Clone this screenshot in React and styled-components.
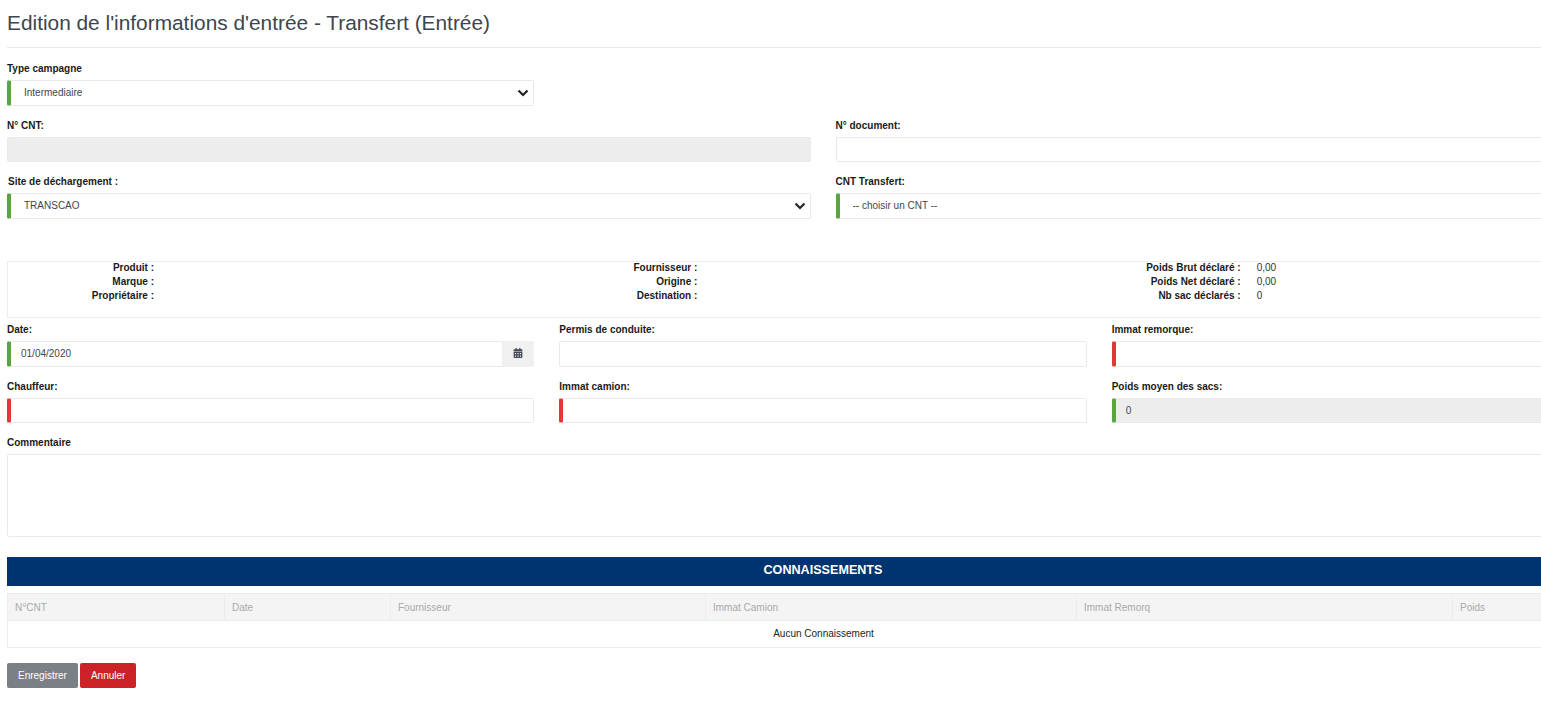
import React from "react";
import styled, { createGlobalStyle } from "styled-components";
import { FaCalendarAlt } from "react-icons/fa";

const Global = createGlobalStyle`
  html, body { margin: 0; padding: 0; background: #fff; overflow: hidden; height: 100%; }
  body { font-family: "Liberation Sans", Arial, sans-serif; color: #212529; }
  * { box-sizing: border-box; }
`;

const Page = styled.div`
  width: 1646px;
  padding: 0 7px;
`;
const TitleBar = styled.div`
  height: 48px;
  border-bottom: 1px solid #e9e9e9;
  padding-top: 9px;
  margin-bottom: 15px;
`;
const Title = styled.h1`
  margin: 0;
  font-size: 20.85px;
  line-height: 28px;
  font-weight: 400;
  color: #3c4650;
`;
const Row = styled.div`
  display: grid;
  grid-template-columns: repeat(${(p) => p.$cols}, 1fr);
  column-gap: 25px;
  margin-bottom: ${(p) => p.$mb ?? 14}px;
`;
const Field = styled.div`
  display: flex;
  flex-direction: column;
  min-width: 0;
`;
const Label = styled.label`
  font-size: 10px;
  line-height: 12px;
  font-weight: 700;
  color: #1a1a1a;
  margin-bottom: 5px;
  padding-left: ${(p) => (p.$indent ? 1 : 0)}px;
`;
const controlCss = `
  width: 100%;
  height: 25.5px;
  font-family: "Liberation Sans", Arial, sans-serif;
  font-size: 10px;
  color: #3f464d;
  background: #fff;
  border: 1px solid #e9e9e9;
  border-radius: 2px;
  outline: none;
`;
const Input = styled.input`
  ${controlCss}
  padding: 0 0 0 ${(p) => (p.$accent ? 10 : 8)}px;
  background: ${(p) => (p.disabled ? "#ededed" : "#fff")};
  border-left: ${(p) =>
    p.$accent ? `4px solid ${p.$accent}` : "1px solid #e9e9e9"};
`;
const SelectWrap = styled.div`
  position: relative;
  width: 100%;
`;
const Select = styled.select`
  ${controlCss}
  appearance: none;
  padding: 0 0 1px 13px;
  border-left: 4px solid #5aa63e;
`;
const Chevron = styled.svg`
  position: absolute;
  right: 5px;
  top: 8px;
  width: 12px;
  height: 10px;
  pointer-events: none;
`;
const InputGroup = styled.div`
  display: flex;
  width: 100%;
`;
const DateInput = styled(Input)`
  flex: 1;
  min-width: 0;
  border-right: 0;
  border-radius: 2px 0 0 2px;
`;
const Addon = styled.span`
  width: 32px;
  height: 25.5px;
  padding-right: 1px;
  padding-bottom: 1px;
  display: flex;
  align-items: center;
  justify-content: center;
  background: #f0f0f0;
  border-radius: 0 2px 2px 0;
  color: #3f4a54;
  font-size: 10px;
`;
const InfoBox = styled.div`
  display: grid;
  grid-template-columns: repeat(3, 1fr);
  height: 57px;
  margin: 42.5px 0 6px;
  border: 1px solid #ececec;
`;
const InfoColumn = styled.dl`
  display: grid;
  grid-template-columns: 146px 1fr;
  grid-auto-rows: 14px;
  column-gap: 16px;
  margin: -1px 0 0;
  font-size: 10px;
  line-height: 14px;
`;
const InfoTerm = styled.dt`
  font-weight: 700;
  text-align: right;
  color: #1a1a1a;
`;
const InfoValue = styled.dd`
  margin: 0;
  color: #333;
`;
const Textarea = styled.textarea`
  ${controlCss}
  display: block;
  height: 83px;
  resize: none;
`;
const Band = styled.div`
  height: 29px;
  margin-top: 20px;
  background: #003470;
  color: #fff;
  font-size: 12.6px;
  font-weight: 700;
  line-height: 27px;
  text-align: center;
`;
const Table = styled.table`
  width: 100%;
  margin-top: 7px;
  border-collapse: collapse;
  table-layout: fixed;
  font-size: 10px;
  border: 1px solid #ececec;
`;
const Th = styled.th`
  width: ${(p) => p.$w}px;
  height: 27px;
  padding: 1px 7px 0;
  background: #f4f4f4;
  border: 1px solid #ececec;
  color: #a9a9a9;
  font-weight: 400;
  text-align: left;
`;
const Td = styled.td`
  height: 27px;
  padding: 0 0 2px;
  text-align: center;
  color: #212529;
  border: 1px solid #ececec;
`;
const Actions = styled.div`
  display: flex;
  gap: 2px;
  margin-top: 15px;
`;
const Button = styled.button`
  height: 25px;
  padding: 0 ${(p) => p.$px}px;
  border: 0;
  border-radius: 2px;
  background: ${(p) => p.$bg};
  color: #fff;
  font-family: "Liberation Sans", Arial, sans-serif;
  font-size: 10px;
`;

const ChevronIcon = () => (
  <Chevron viewBox="0 0 12 10">
    <path d="M1.5 2.5 L6 7 L10.5 2.5" fill="none" stroke="#222" strokeWidth="2.2" />
  </Chevron>
);

const GREEN = "#5aa63e";
const RED = "#e03a35";

const Choice = ({ value }) => (
  <SelectWrap>
    <Select defaultValue={value}>
      <option>{value}</option>
    </Select>
    <ChevronIcon />
  </SelectWrap>
);

const info = [
  [["Produit :", ""], ["Marque :", ""], ["Propriétaire :", ""]],
  [["Fournisseur :", ""], ["Origine :", ""], ["Destination :", ""]],
  [["Poids Brut déclaré :", "0,00"], ["Poids Net déclaré :", "0,00"], ["Nb sac déclarés :", "0"]],
];
const columns = [
  ["N°CNT", 217],
  ["Date", 166],
  ["Fournisseur", 315],
  ["Immat Camion", 371],
  ["Immat Remorq", 376],
  ["Poids", 187],
];

export default function App() {
  return (
    <Page>
      <Global />
      <TitleBar>
        <Title>Edition de l'informations d'entrée - Transfert (Entrée)</Title>
      </TitleBar>
      <Row $cols={3}>
        <Field>
          <Label>Type campagne</Label>
          <Choice value="Intermediaire" />
        </Field>
      </Row>
      <Row $cols={2}>
        <Field>
          <Label>N° CNT:</Label>
          <Input disabled />
        </Field>
        <Field>
          <Label>N° document:</Label>
          <Input />
        </Field>
      </Row>
      <Row $cols={2} $mb={0}>
        <Field>
          <Label $indent>Site de déchargement :</Label>
          <Choice value="TRANSCAO" />
        </Field>
        <Field>
          <Label>CNT Transfert:</Label>
          <Choice value="-- choisir un CNT --" />
        </Field>
      </Row>
      <InfoBox>
        {info.map((col, i) => (
          <InfoColumn key={i}>
            {col.map(([k, v]) => (
              <React.Fragment key={k}>
                <InfoTerm>{k}</InfoTerm>
                <InfoValue>{v}</InfoValue>
              </React.Fragment>
            ))}
          </InfoColumn>
        ))}
      </InfoBox>
      <Row $cols={3}>
        <Field>
          <Label>Date:</Label>
          <InputGroup>
            <DateInput $accent={GREEN} defaultValue="01/04/2020" />
            <Addon><FaCalendarAlt /></Addon>
          </InputGroup>
        </Field>
        <Field>
          <Label>Permis de conduite:</Label>
          <Input />
        </Field>
        <Field>
          <Label>Immat remorque:</Label>
          <Input $accent={RED} />
        </Field>
      </Row>
      <Row $cols={3}>
        <Field>
          <Label>Chauffeur:</Label>
          <Input $accent={RED} />
        </Field>
        <Field>
          <Label>Immat camion:</Label>
          <Input $accent={RED} />
        </Field>
        <Field>
          <Label>Poids moyen des sacs:</Label>
          <Input $accent={GREEN} disabled value="0" readOnly />
        </Field>
      </Row>
      <Field>
        <Label>Commentaire</Label>
        <Textarea />
      </Field>
      <Band>CONNAISSEMENTS</Band>
      <Table>
        <thead>
          <tr>
            {columns.map(([name, w]) => (
              <Th key={name} $w={w}>{name}</Th>
            ))}
          </tr>
        </thead>
        <tbody>
          <tr>
            <Td colSpan={6}>Aucun Connaissement</Td>
          </tr>
        </tbody>
      </Table>
      <Actions>
        <Button $bg="#7b7f86" $px={11}>Enregistrer</Button>
        <Button $bg="#cc2127" $px={11}>Annuler</Button>
      </Actions>
    </Page>
  );
}
